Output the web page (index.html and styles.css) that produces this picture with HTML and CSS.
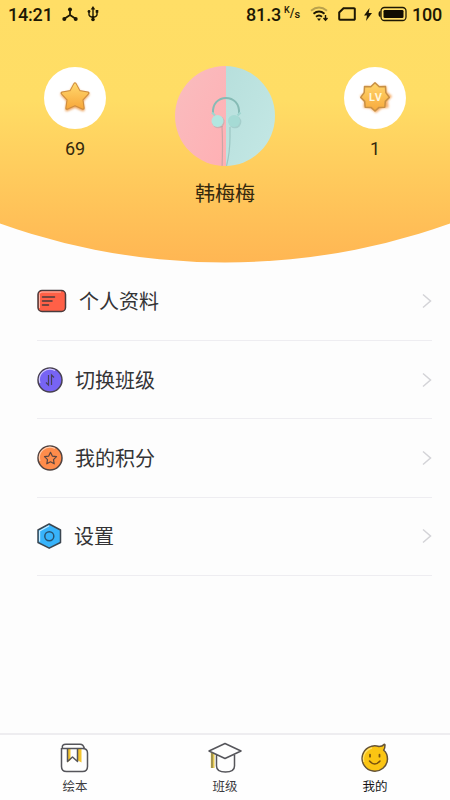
FILE: index.html
```html
<!DOCTYPE html>
<html lang="zh-CN">
<head>
<meta charset="utf-8">
<meta name="viewport" content="width=device-width, initial-scale=1">
<title>我的</title>
<link rel="stylesheet" href="styles.css">
</head>
<body>
<div class="app">
  <header class="hero">
    <div class="status">
      <div class="status-left">
        <span class="time">14:21</span>
        <svg width="16" height="15" viewBox="0 0 16 15"><g stroke="#1d1704" stroke-width="1.8" fill="none"><path d="M8 3v5M8 8l-6 4M8 8l6 4"/></g><g fill="#1d1704"><circle cx="8" cy="2.5" r="2"/><circle cx="2.3" cy="12" r="2"/><circle cx="13.7" cy="12" r="2"/></g></svg>
        <svg class="usb" width="12" height="16" viewBox="0 0 12 16"><path d="M6 3v10M2 6v2.5q0 2 4 3M10 5v3.500q0 2-4 3" fill="none" stroke="#1d1704" stroke-width="1.4"/><g fill="#1d1704"><path d="M6 0l2.300 3.500H3.700z"/><circle cx="2" cy="5.500" r="1.400"/><path d="M8.700 4h2.600v2.700H8.700z"/><circle cx="6" cy="13.500" r="1.800"/></g></svg>
      </div>
      <div class="status-right">
        <span class="speed">81.3</span>
        <span class="unit"><i class="unit-k">K</i><i class="unit-slash">/</i><i class="unit-s">s</i></span>
        <svg class="wifi" width="20" height="16" viewBox="0 0 20 16"><g fill="none" stroke-width="1.9"><path d="M1 4.800Q9 -1.700 17 4.800" stroke="#b9a14c"/><path d="M3.500 7.800Q9 3.300 14.500 7.800M6 10.800Q9 8.300 12 10.800" stroke="#1d1704"/></g><path d="M7 12.500h4L9 15z" fill="#1d1704"/><path d="M15.500 9v5M13.500 12l2 2.300 2-2.300" fill="none" stroke="#1d1704" stroke-width="1.400"/></svg>
        <svg class="sim" width="18" height="14" viewBox="0 0 18 14"><path d="M5.500 1.200H16a.8.8 0 0 1 .8.8v10a.8.800 0 0 1-.8.800H2a.8.8 0 0 1-.8-.8V5.500z" fill="none" stroke="#1d1704" stroke-width="2"/></svg>
        <svg class="bolt" width="8" height="13" viewBox="0 0 8 13"><path d="M5.500 0L0 7.500h3L2 13l6-8H4.700z" fill="#1d1704"/></svg>
        <svg class="battery" width="29" height="16" viewBox="0 0 29 16"><rect x="3" y="1.500" width="25" height="13" rx="3.500" fill="none" stroke="#1d1704" stroke-width="1.300"/><rect x="5.500" y="4" width="20" height="8" rx="1.300" fill="#110d02"/><path d="M2.500 5v6Q.5 11 .5 8T2.500 5z" fill="#1d1704"/></svg>
        <span class="percent">100</span>
      </div>
    </div>
    <div class="profile">
      <div class="stat">
        <div class="stat-disc">
          <svg width="62" height="62" viewBox="0 0 62 62">
            <defs><linearGradient id="gold" x1="0" y1="0" x2="0" y2="1"><stop offset="0" stop-color="#ffd66b"/><stop offset="1" stop-color="#f8a93c"/></linearGradient><filter id="soft" x="-50%" y="-50%" width="200%" height="200%"><feGaussianBlur stdDeviation="1.300"/></filter></defs>
            <path d="M31 18l4.200 7.500 8.800 1.700-6 6.600 1.200 9-8.200-3.600-8.200 3.600 1.200-9-6-6.600 8.800-1.700z" fill="#eca35d" stroke="#eca35d" stroke-width="3" stroke-linejoin="round" filter="url(#soft)"/>
            <path d="M31 16.800l4.200 7.600 8.800 1.600-6 6.600 1.200 8.700-8.200-3.600-8.200 3.600 1.200-8.700-6-6.600 8.800-1.600z" fill="#d2913f" stroke="#cf8d3d" stroke-width="3" stroke-linejoin="round"/>
            <path d="M31 17.200l4 7.500 8.400 1.600-5.800 6.300 1.200 8.200-7.800-3.400-7.800 3.400 1.200-8.200-5.800-6.300 8.400-1.600z" fill="url(#gold)" stroke="url(#gold)" stroke-width="1.500" stroke-linejoin="round"/>
          </svg>
        </div>
        <span class="stat-value">69</span>
      </div>
      <div class="person">
        <svg class="avatar" width="100" height="100" viewBox="0 0 100 100">
          <defs><clipPath id="round"><circle cx="50" cy="50" r="50"/></clipPath><linearGradient id="pink" x1="0" y1="0" x2="1" y2="1"><stop offset="0" stop-color="#f9bdbf"/><stop offset="1" stop-color="#ffb0b4"/></linearGradient><linearGradient id="mint" x1="0" y1="0" x2="1" y2="1"><stop offset="0" stop-color="#b7dfdc"/><stop offset="1" stop-color="#c4e8e5"/></linearGradient></defs>
          <g clip-path="url(#round)">
            <path d="M0 0h51v100H0z" fill="url(#pink)"/><path d="M51 0h49v100H51z" fill="url(#mint)"/>
            <path d="M38 48C36 26.500 66 26.500 64 48" fill="none" stroke="#86bbb5" stroke-width="2"/>
            <path d="M47 60q1 20 0 42" fill="none" stroke="#c9a6a6" stroke-width="1.200"/><path d="M55 61v10q0 16-4 31" fill="none" stroke="#9cc7c3" stroke-width="1.200"/>
            <circle cx="43.300" cy="56" r="6.300" fill="#7aaaa7" opacity=".35"/><circle cx="60" cy="56" r="6.300" fill="#7aaaa7" opacity=".35"/>
            <circle cx="42.500" cy="55" r="6" fill="#b3e6e0"/><circle cx="59" cy="55" r="6" fill="#a6dbd5"/>
            <path d="M37 46.500l3 3M65.500 46.500l-3 3" stroke="#a0d6d0" stroke-width="2.200"/>
          </g>
        </svg>
        <span class="name">韩梅梅</span>
      </div>
      <div class="stat">
        <div class="stat-disc">
          <svg width="62" height="62" viewBox="0 0 62 62">
            <path d="M31 18l4 3 6-.5.500 5 4.500 4-3.500 4 .5 6-6 .500-5 4-5-4-6-.5.500-6-3.500-4 4.500-4 .5-5 6 .5z" fill="#f39a4b" stroke="#f7b06d" stroke-width="3" filter="url(#soft)"/>
            <path d="M31 15.800l4.200 4 6.300-.2.300 6 3.500 4.800-4 4-.5 5.800-5.800.2-4 3.600-4-3.600-5.800-.2-.5-5.800-4-4 3.500-4.800.3-6 6.300.2z" fill="url(#gold)" stroke="#c89045" stroke-width="1.500" stroke-linejoin="round"/>
            <text class="level" x="32" y="34" text-anchor="middle">LV</text>
          </svg>
        </div>
        <span class="stat-value">1</span>
      </div>
    </div>
  </header>
  <main class="menu">
    <a class="row">
      <svg width="30" height="24" viewBox="0 0 30 24"><rect x="1" y="1.500" width="27.500" height="21" rx="4" fill="#ff6047" stroke="#493b3d" stroke-width="1.500"/><path d="M2.500 19V5.500Q2.500 3 5 3h19" fill="none" stroke="#ffb9aa" stroke-width="1"/><path d="M5.500 8h12M5.500 12h9.500M5.500 16h6" stroke="#493b3d" stroke-width="1.500" stroke-linecap="round"/></svg>
      <span class="label">个人资料</span>
      <svg class="chevron" width="10" height="16" viewBox="0 0 10 16"><path d="M1 1.500L8.500 8 1 14.500"/></svg>
    </a>
    <a class="row">
      <svg width="26" height="26" viewBox="0 0 26 26"><circle cx="13" cy="13" r="12" fill="#7764f4" stroke="#484150" stroke-width="1.500"/><path d="M3 16A10.500 10.500 0 0 1 18 3.500" fill="none" stroke="#d5cdff" stroke-width="1.200"/><path d="M11.500 8v10l-2.500-2.500M14.500 18V8l2.500 2.500" fill="none" stroke="#48405d" stroke-width="1.200"/></svg>
      <span class="label">切换班级</span>
      <svg class="chevron" width="10" height="16" viewBox="0 0 10 16"><path d="M1 1.500L8.500 8 1 14.500"/></svg>
    </a>
    <a class="row">
      <svg width="26" height="26" viewBox="0 0 26 26"><circle cx="13" cy="13" r="12" fill="#ff8c4b" stroke="#504341" stroke-width="1.500"/><path d="M3 16A10.500 10.500 0 0 1 18 3.500" fill="none" stroke="#ffcfb2" stroke-width="1.200"/><path d="M13.500 7.300l1.800 3.800 4.200.5-3 3 .7 4.200-3.700-2-3.700 2 .7-4.200-3-3 4.200-.5z" fill="none" stroke="#5b4540" stroke-width="1.200" stroke-linejoin="round"/></svg>
      <span class="label">我的积分</span>
      <svg class="chevron" width="10" height="16" viewBox="0 0 10 16"><path d="M1 1.500L8.500 8 1 14.500"/></svg>
    </a>
    <a class="row">
      <svg width="25" height="26" viewBox="0 0 25 26"><path d="M12.200 1L23.500 7v12.500L12.200 25.200 1 19.500V7z" fill="#38b4fb" stroke="#3b4650" stroke-width="1.500" stroke-linejoin="round"/><path d="M2.600 18.500V8l9.500-5.200" fill="none" stroke="#c9ecff" stroke-width="1.200"/><circle cx="12.300" cy="13.200" r="4.500" fill="none" stroke="#285370" stroke-width="1.500"/></svg>
      <span class="label">设置</span>
      <svg class="chevron" width="10" height="16" viewBox="0 0 10 16"><path d="M1 1.500L8.500 8 1 14.500"/></svg>
    </a>
  </main>
  <nav class="tabs">
    <a class="tab">
      <svg width="36" height="32" viewBox="0 0 36 32"><path d="M10 7h3.500v11L10 20.500zM20 7h4.500v13.500L20 18z" fill="#f4c52f"/><path d="M4.500 6v18.500q0 5 5 5h16q5 0 5-5V11q0-4.500-5-4.500H5.500q-1-4.200 3.500-4.200h14q3.500 0 4.500 4.700M10.500 7v12.500l5-4.500 5 4.500V7" fill="none" stroke="#55555a" stroke-width="1.500" stroke-linejoin="round"/></svg>
      <span>绘本</span>
    </a>
    <a class="tab">
      <svg width="36" height="32" viewBox="0 0 36 32"><path d="M3.800 11h3.700v15H3.800z" fill="#e6ca50"/><path d="M18 1.500L34 9 18 16.500 2 9zM9.500 13v11q0 6 9 6t9-6V13" fill="none" stroke="#55555a" stroke-width="1.500" stroke-linejoin="round"/><path d="M5 10.500V26" stroke="#77704d" stroke-width="1.200"/></svg>
      <span>班级</span>
    </a>
    <a class="tab active">
      <svg width="36" height="32" viewBox="0 0 36 32"><path d="M22 4.500q3.500 0 5-2 .8-.5 1 .5 0 3.500-1.300 5.300Q30.500 11.500 30.500 17A12.700 12.700 0 1 1 22 4.500z" fill="#fbc513" stroke="#655337" stroke-width="1.500" stroke-linejoin="round"/><path d="M7 20A11 11 0 0 1 15 6" fill="none" stroke="#ffe06d" stroke-width="1.300"/><path d="M13 12.700v2M22.500 12.700v2" stroke="#78520f" stroke-width="1.800" stroke-linecap="round"/><path d="M12.500 19q5.200 6 10.500 0" fill="none" stroke="#78520f" stroke-width="1.500" stroke-linecap="round"/></svg>
      <span>我的</span>
    </a>
  </nav>
</div>
</body>
</html>
```

FILE: styles.css
```css
* { box-sizing: border-box; }
body { margin: 0; font-family: Roboto, "Noto Sans CJK SC", sans-serif; color: #333; background: #fdfdfd; }
svg { display: block; flex: none; }
.app { width: 450px; height: 800px; display: flex; flex-direction: column; overflow: hidden; }
.hero { height: 262.500px; flex: none; background: linear-gradient(#ffde66 0, #ffdd65 100px, #ffb653 262px); clip-path: circle(668.500px at 50% -406px); }
.status { height: 28px; padding: 0 8px; display: flex; justify-content: space-between; color: #1d1704; font-size: 18px; font-weight: 500; }
.status-left, .status-right { display: flex; align-items: center; }
.time { width: 45px; letter-spacing: -.2px; }
.status-left svg { margin-left: 9px; }
.speed { letter-spacing: -.2px; }
.unit { display: flex; width: 17px; margin-left: 3px; font-size: 11px; line-height: 14px; }
.unit i { font-style: normal; }
.unit-k { font-size: 9px; line-height: 8px; }
.unit-slash { font-size: 12px; }
.unit-s { padding-top: 2px; }
.wifi { margin-left: 9px; }
.sim { margin-left: 8px; }
.bolt { margin-left: 8px; }
.battery { margin-left: 6px; }
.percent { margin-left: 5px; width: 30px; letter-spacing: -.2px; }
.profile { padding: 38px 30px 0; display: flex; justify-content: space-between; }
.stat { width: 90px; display: flex; flex-direction: column; align-items: center; }
.stat-disc { width: 62px; height: 62px; margin-top: 1px; border-radius: 50%; background: #fff; display: flex; align-items: center; justify-content: center; }
.stat-value { margin-top: 9px; font-size: 18px; line-height: 22px; letter-spacing: -.1px; color: #35280d; }
.level { font: 700 11px Roboto, sans-serif; letter-spacing: 1px; fill: #fff6d8; }
.person { display: flex; flex-direction: column; align-items: center; }
.name { margin-top: 14px; font-size: 20px; line-height: 28px; color: #35280d; }
.menu { flex: 1; padding: 0 18px 0 37px; }
.row { height: 78.400px; display: flex; align-items: center; border-bottom: 1px solid #eeedf1; }
.label { flex: 1; margin-left: 12px; padding-top: 2px; font-size: 20px; line-height: 30px; color: #343436; }
.chevron path { fill: none; stroke: #d3d3d7; stroke-width: 1.500; }
.tabs { height: 67px; flex: none; display: grid; grid-template-columns: repeat(3, 1fr); border-top: 2px solid #eeedf0; background: #fefefe; }
.tab { display: flex; flex-direction: column; align-items: center; padding-top: 7px; font-size: 12.500px; line-height: 18px; color: #3c3c40; }
.tab span { margin-top: 4px; }
.tab.active { color: #151515; }
```
